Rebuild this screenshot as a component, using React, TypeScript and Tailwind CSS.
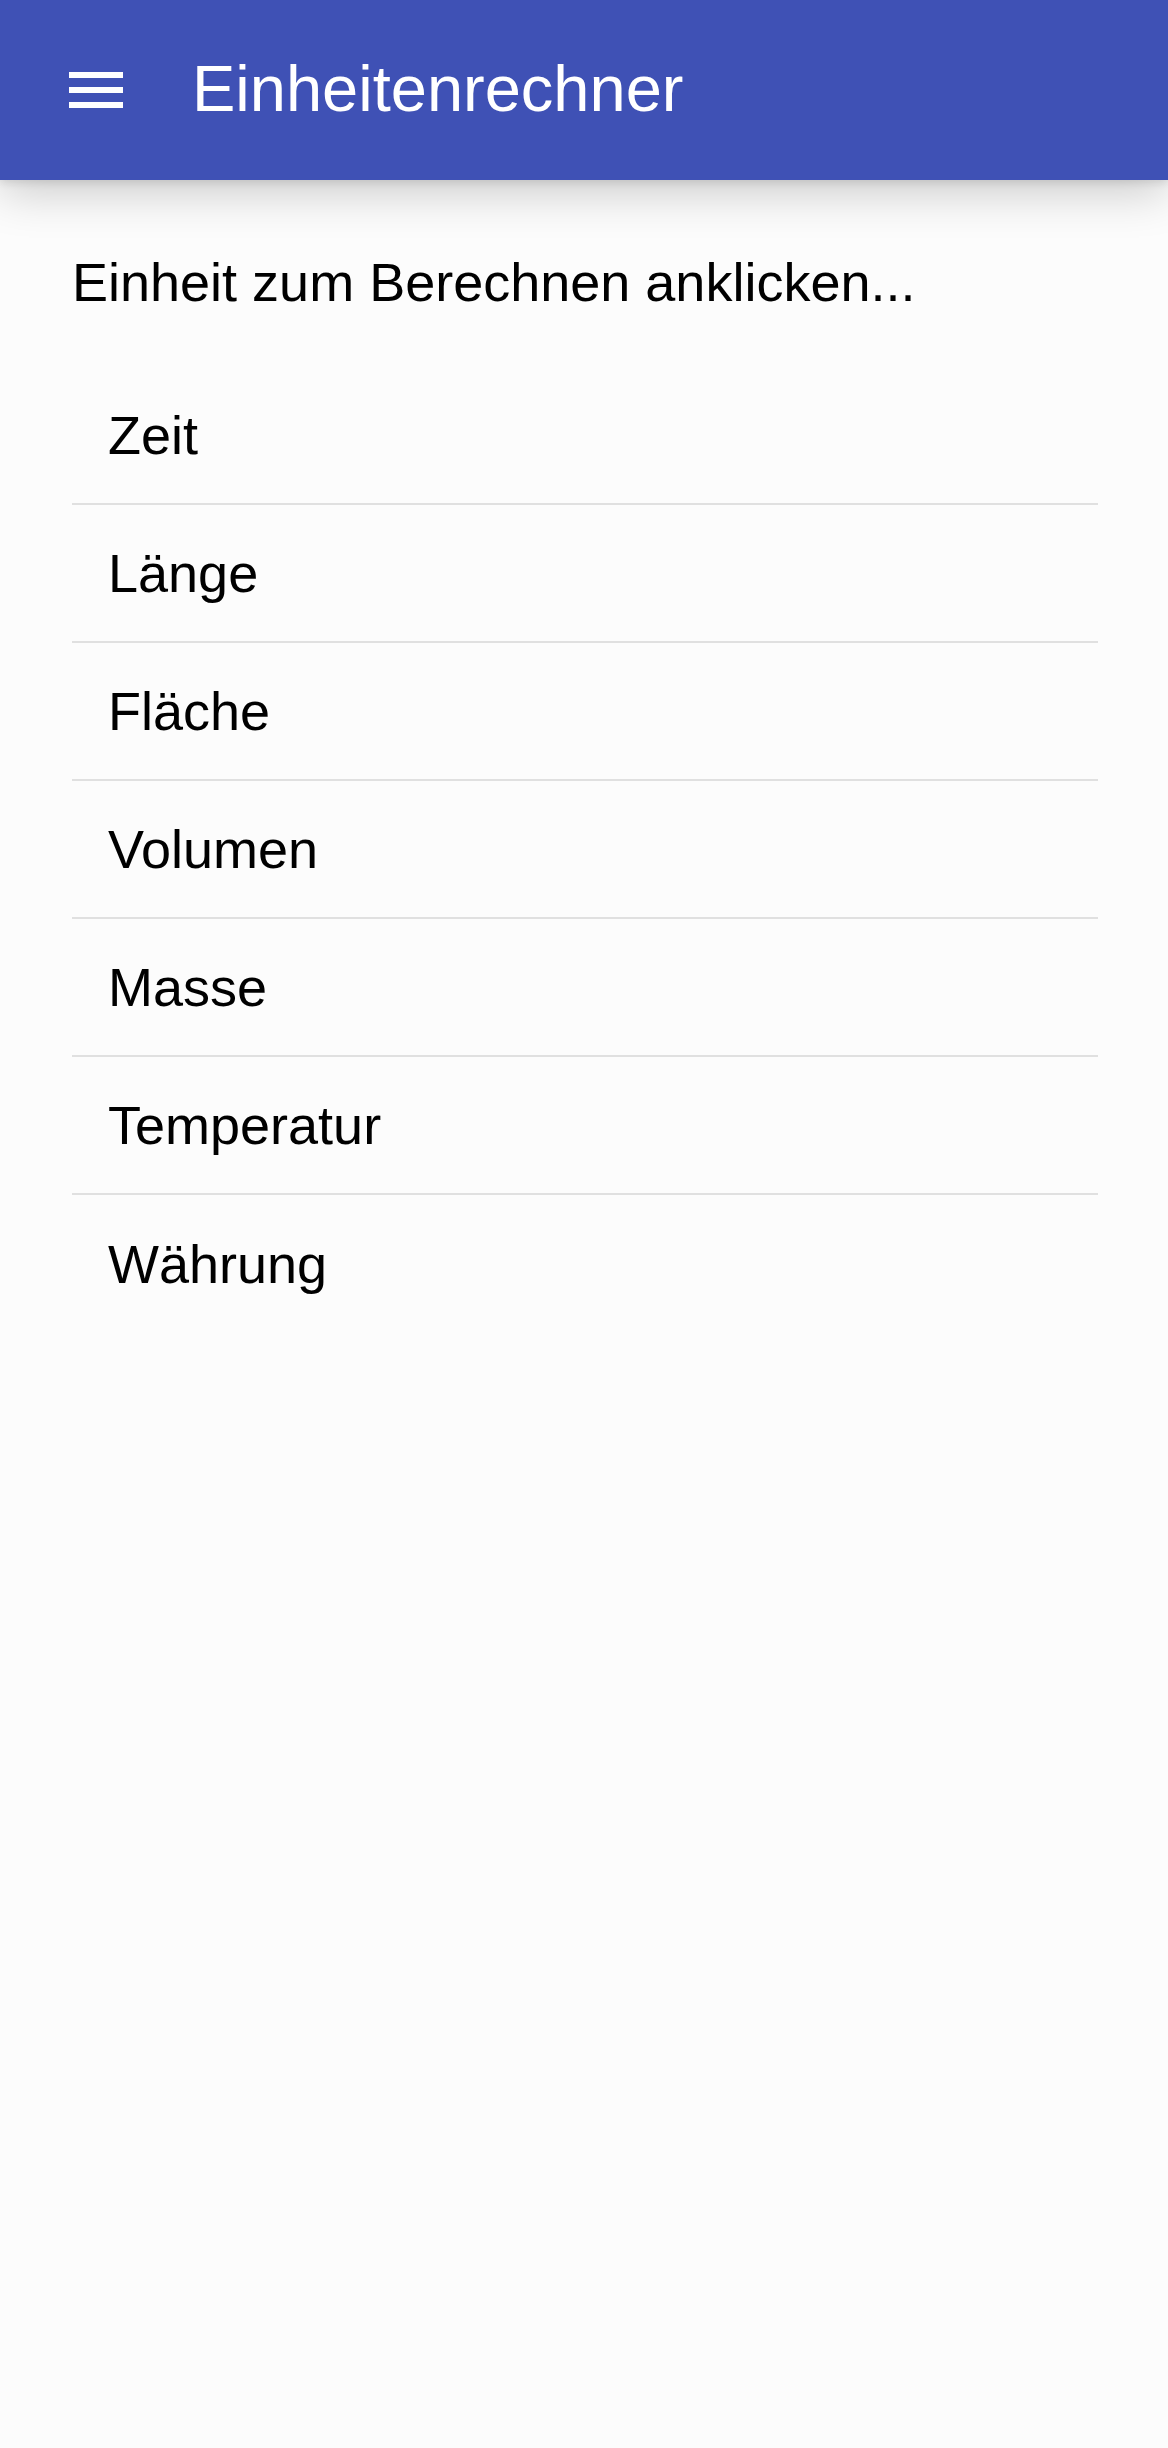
const units = ["Zeit", "Länge", "Fläche", "Volumen", "Masse", "Temperatur", "Währung"]

function MenuIcon() {
  return (
    <svg viewBox="0 0 24 24" className="h-[72px] w-[72px]" fill="#ffffff">
      <path d="M3 18h18v-2H3v2zm0-5h18v-2H3v2zm0-7v2h18V6H3z" />
    </svg>
  )
}

export default function App() {
  return (
    <div className="min-h-[2448px] bg-[#fcfcfc] font-['Liberation_Sans',Arial,sans-serif] text-black">
      <header className="relative z-10 flex h-[180px] items-center bg-[#3f51b5] pl-[60px] shadow-[0_12px_44px_0_rgba(0,0,0,0.2),0_3px_8px_0_rgba(0,0,0,0.1)]">
        <button className="flex h-[72px] w-[72px] items-center justify-center">
          <MenuIcon />
        </button>
        <h1 className="ml-[60px] mb-[4px] text-[65px] leading-[normal] font-normal text-white">
          Einheitenrechner
        </h1>
      </header>
      <main className="ml-[72px] w-[1026px] pt-[71px]">
        <p className="text-[54px] leading-[normal]">Einheit zum Berechnen anklicken...</p>
        <ul className="mt-[54px]">
          {units.map((u, i) => (
            <li
              key={u}
              className={
                i < units.length - 1
                  ? "flex h-[138px] items-center border-b-2 border-[#e0e0e0] pl-[36px] text-[54px] leading-[normal]"
                  : "flex h-[138px] items-center pl-[36px] text-[54px] leading-[normal]"
              }
            >
              {u}
            </li>
          ))}
        </ul>
      </main>
    </div>
  )
}
